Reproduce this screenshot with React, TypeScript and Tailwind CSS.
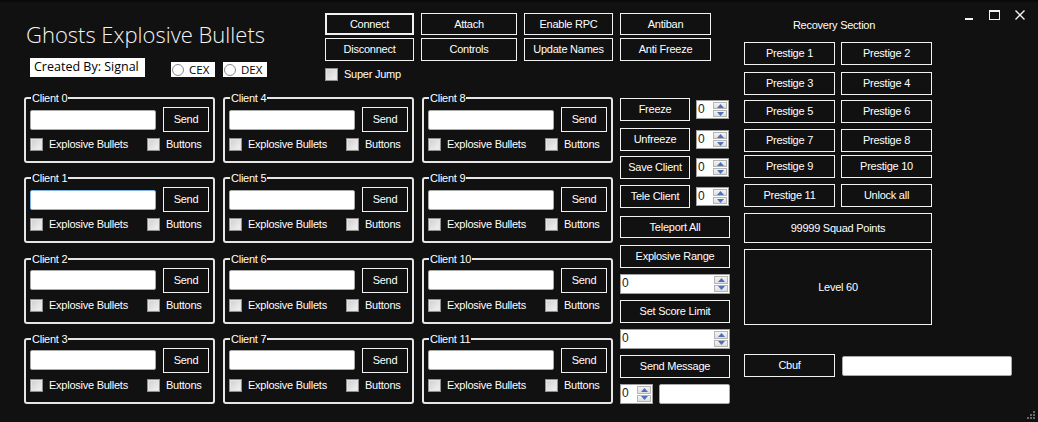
import React from "react";

const btn =
  "flex items-center justify-center border border-[#f2f2f2] bg-[#111111] text-[11px] tracking-[-0.25px] text-white leading-none";

const Button = ({ label, className = "" }: { label: string; className?: string }) => (
  <div className={`${btn} ${className}`}>{label}</div>
);

const CheckBox = ({ label, className = "" }: { label: string; className?: string }) => (
  <div className={`flex items-center ${className}`}>
    <span className="h-[13px] w-[13px] border border-[#8f8f8f] bg-[linear-gradient(135deg,#cfcfcf,#f3f3f3)] shadow-[inset_0_0_0_1px_#e6e6e6]" />
    <span className="ml-[6px] text-[11px] tracking-[-0.25px] leading-none text-white">{label}</span>
  </div>
);

const TextBox = ({ className = "", focused = false }: { className?: string; focused?: boolean }) => (
  <div
    className={`rounded-[2px] border bg-white ${focused ? "border-[#7fb2e5]" : "border-[#a9a9a9]"} ${className}`}
  />
);

const Spinner = () => (
  <div className="flex h-full w-[15px] flex-col gap-[1px] py-[1px] pr-[1px]">
    {[0, 1].map((i) => (
      <div key={i} className="flex flex-1 items-center justify-center border border-[#b5b5b5] bg-[linear-gradient(#f4f4f4,#dedede)]">
        <svg width="7" height="4" viewBox="0 0 7 4">
          {i === 0 ? <path d="M0 4 L3.5 0 L7 4 Z" fill="#4d6fb8" /> : <path d="M0 0 L3.5 4 L7 0 Z" fill="#4d6fb8" />}
        </svg>
      </div>
    ))}
  </div>
);

const Numeric = ({ className = "" }: { className?: string }) => (
  <div className={`flex border border-[#a0a0a0] bg-white ${className}`}>
    <span className="flex-1 pl-[1px] text-[12px] leading-[17px] text-[#1a1a1a]">0</span>
    <Spinner />
  </div>
);

const ClientGroup = ({ n }: { n: number }) => (
  <div className="relative h-[66px] rounded-[3px] border-2 border-[#e6e6e6] px-[4px] pt-[8px]">
    <span className="absolute -top-[8px] left-[5px] bg-[#111111] px-[1px] text-[11px] tracking-[-0.25px] leading-[14px] text-white">
      Client {n}
    </span>
    <div className="flex items-center">
      <TextBox className="h-[20px] w-[126px]" focused={n === 1} />
      <Button label="Send" className="ml-[7px] h-[25px] w-[46px]" />
    </div>
    <div className="mt-[6px] flex items-center">
      <CheckBox label="Explosive Bullets" className="w-[117px]" />
      <CheckBox label="Buttons" />
    </div>
  </div>
);

const ControlRow = ({ label, className = "" }: { label: string; className?: string }) => (
  <div className={`flex items-start ${className}`}>
    <Button label={label} className="h-[23px] w-[70px]" />
    <Numeric className="ml-[6px] mt-[2px] h-[19px] w-[33px]" />
  </div>
);

export default function App() {
  const prestigeRows: [string, string, string][] = [
    ["Prestige 1", "Prestige 2", "mt-[10px]"],
    ["Prestige 3", "Prestige 4", "mt-[7px]"],
    ["Prestige 5", "Prestige 6", "mt-[5px]"],
    ["Prestige 7", "Prestige 8", "mt-[6px]"],
    ["Prestige 9", "Prestige 10", "mt-[3px]"],
    ["Prestige 11", "Unlock all", "mt-[6px]"],
  ];

  return (
    <div className="relative h-[422px] w-[1038px] overflow-hidden border-t-2 border-[#0a0a0a] bg-[#111111] font-['Liberation_Sans',Arial,sans-serif] text-white">
      <div className="flex pl-[24px] pt-[11px]">
        {/* Left main area */}
        <div className="w-[706px]">
          {/* Header */}
          <div className="flex h-[84px]">
            <div className="w-[301px]">
              <h1 className="ml-[2px] mt-[8px] font-['Open_Sans',sans-serif] text-[22px] font-light leading-[26px] text-[#f4f4f4]">
                Ghosts Explosive Bullets
              </h1>
              <div className="ml-[6px] mt-[11px] flex items-start">
                <div className="flex h-[19px] w-[115px] items-center bg-white pl-[4px] font-['Open_Sans',sans-serif] text-[12.5px] leading-none text-black">
                  Created By: Signal
                </div>
                <div className="ml-[26px] mt-[4px] flex h-[15px] w-[44px] items-center bg-white pl-[1px]">
                  <span className="h-[12px] w-[12px] rounded-full border border-[#8a8a8a] bg-white" />
                  <span className="ml-[5px] font-['Open_Sans',sans-serif] text-[11.5px] leading-none text-black">CEX</span>
                </div>
                <div className="ml-[8px] mt-[4px] flex h-[15px] w-[44px] items-center bg-white pl-[1px]">
                  <span className="h-[12px] w-[12px] rounded-full border border-[#8a8a8a] bg-white" />
                  <span className="ml-[5px] font-['Open_Sans',sans-serif] text-[11.5px] leading-none text-black">DEX</span>
                </div>
              </div>
            </div>
            <div>
              <div className="grid grid-cols-[89px_96px_89px_91px] gap-x-[7px] gap-y-[3px]">
                <Button label="Connect" className="h-[22px] border-2" />
                <Button label="Attach" className="h-[22px]" />
                <Button label="Enable RPC" className="h-[22px]" />
                <Button label="Antiban" className="h-[22px]" />
                <Button label="Disconnect" className="h-[23px]" />
                <Button label="Controls" className="h-[23px]" />
                <Button label="Update Names" className="h-[23px]" />
                <Button label="Anti Freeze" className="h-[23px]" />
              </div>
              <CheckBox label="Super Jump" className="mt-[7px]" />
            </div>
          </div>

          {/* Body */}
          <div className="flex">
            <div className="grid grid-flow-col grid-cols-[191px_191px_191px] grid-rows-4 gap-x-2 gap-y-[14px]">
              {Array.from({ length: 12 }, (_, i) => (
                <ClientGroup key={i} n={i} />
              ))}
            </div>
            <div className="ml-[7px] flex w-[110px] flex-col">
              <ControlRow label="Freeze" className="mt-[1px]" />
              <ControlRow label="Unfreeze" className="mt-[7px]" />
              <ControlRow label="Save Client" className="mt-[5px]" />
              <ControlRow label="Tele Client" className="mt-[6px]" />
              <Button label="Teleport All" className="mt-[8px] h-[22px] w-[110px]" />
              <Button label="Explosive Range" className="mt-[7px] h-[23px] w-[110px]" />
              <Numeric className="mt-[6px] h-[20px] w-[110px]" />
              <Button label="Set Score Limit" className="mt-[6px] h-[23px] w-[110px]" />
              <Numeric className="mt-[6px] h-[20px] w-[110px]" />
              <Button label="Send Message" className="mt-[6px] h-[23px] w-[110px]" />
              <div className="mt-[6px] flex">
                <Numeric className="h-[20px] w-[33px]" />
                <TextBox className="ml-[6px] h-[20px] w-[71px]" />
              </div>
            </div>
          </div>
        </div>

        {/* Recovery section */}
        <div className="ml-[14px] w-[268px]">
          <div className="mt-[5px] w-[180px] text-center text-[11px] tracking-[-0.25px] leading-[14px]">Recovery Section</div>
          {prestigeRows.map(([a, b, mt]) => (
            <div key={a} className={`flex gap-[6px] ${mt}`}>
              <Button label={a} className="h-[23px] w-[91px]" />
              <Button label={b} className="h-[23px] w-[91px]" />
            </div>
          ))}
          <Button label="99999 Squad Points" className="mt-[6px] h-[30px] w-[188px]" />
          <Button label="Level 60" className="mt-[6px] h-[76px] w-[188px]" />
          <div className="mt-[29px] flex items-start">
            <Button label="Cbuf" className="h-[23px] w-[91px]" />
            <TextBox className="ml-[7px] mt-[2px] h-[20px] w-[170px]" />
          </div>
        </div>
      </div>

      {/* Window controls */}
      <div className="absolute right-[13px] top-[8px] flex items-center gap-[15px]">
        <svg width="9" height="10" viewBox="0 0 9 10">
          <rect x="0" y="8" width="8" height="2" fill="#f2f2f2" />
        </svg>
        <svg width="11" height="10" viewBox="0 0 11 10">
          <rect x="0.5" y="0.5" width="10" height="9" fill="none" stroke="#f2f2f2" />
          <rect x="0.5" y="0.5" width="10" height="1.5" fill="#f2f2f2" />
        </svg>
        <svg width="10" height="10" viewBox="0 0 10 10">
          <path d="M0.5 0.5 L9.5 9.5 M9.5 0.5 L0.5 9.5" stroke="#f2f2f2" strokeWidth="1.4" />
        </svg>
      </div>

      {/* Resize grip */}
      <svg className="absolute bottom-[3px] right-[3px]" width="9" height="9" viewBox="0 0 9 9">
        {[
          [7, 1],
          [4, 4],
          [7, 4],
          [1, 7],
          [4, 7],
          [7, 7],
        ].map(([x, y], i) => (
          <rect key={i} x={x} y={y} width="2" height="2" fill="#6a6a6a" />
        ))}
      </svg>
    </div>
  );
}
